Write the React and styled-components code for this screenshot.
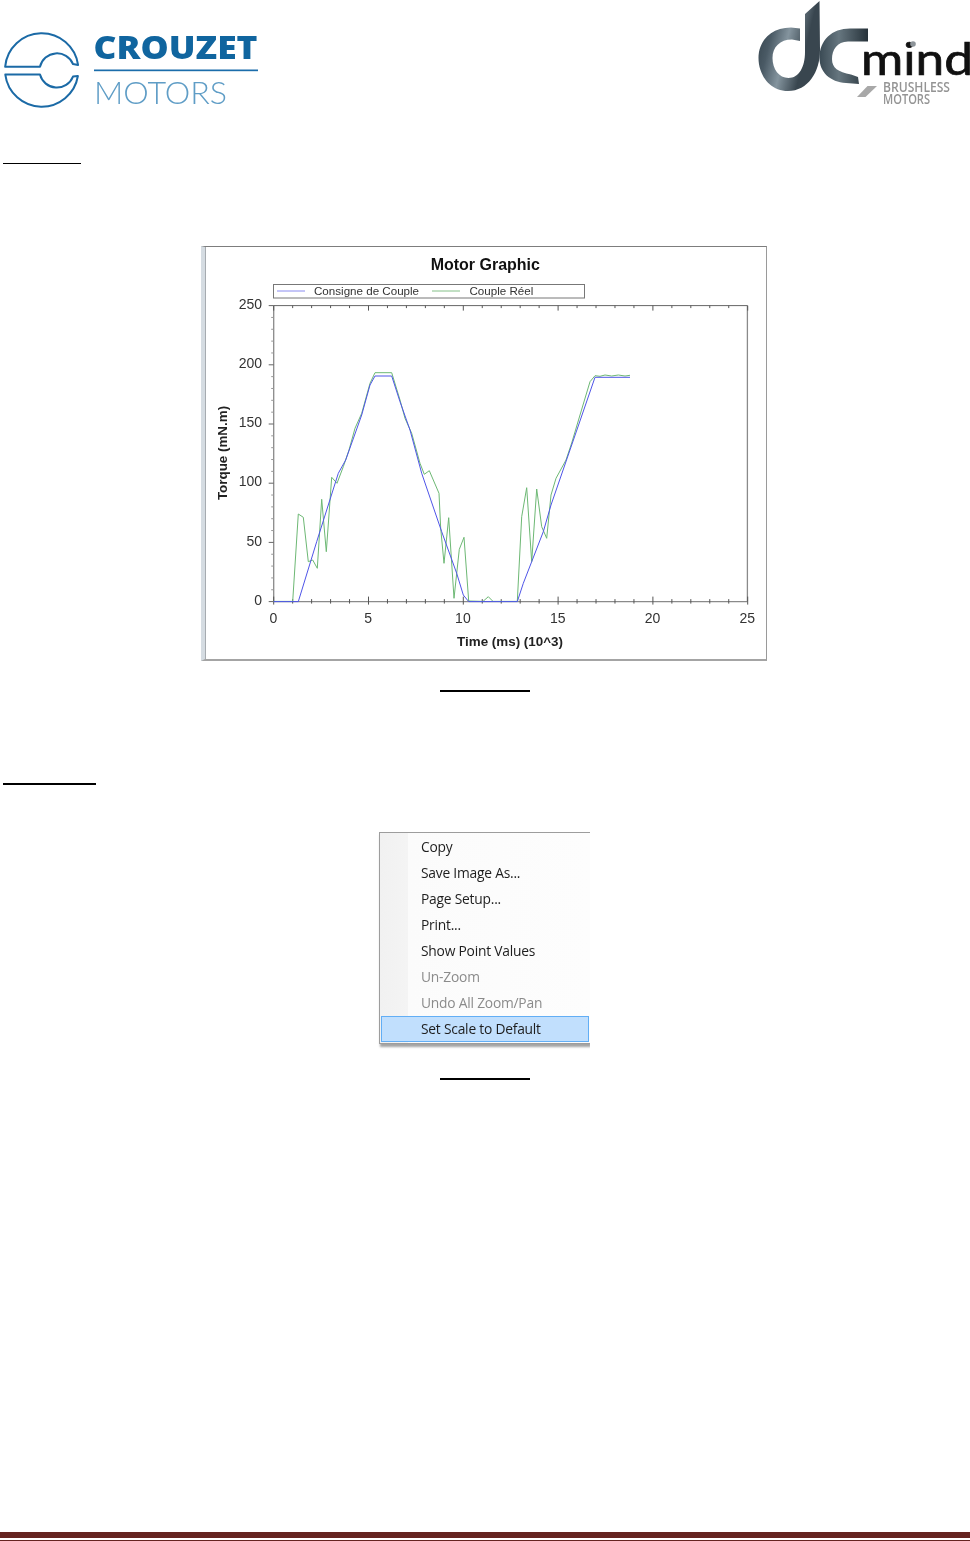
import React from "react";
import styled, { createGlobalStyle } from "styled-components";

const Global = createGlobalStyle`
  html, body { margin: 0; padding: 0; background: #fff; }
  body { font-family: "Liberation Sans", Arial, sans-serif; }
`;

const Page = styled.div`
  display: flex;
  flex-direction: column;
  width: 970px;
  height: 1541px;
  overflow: hidden;
  background: #fff;
`;

const Header = styled.header`
  display: flex;
  justify-content: space-between;
  align-items: flex-start;
  height: 110px;
`;

const Logo = styled.svg`
  display: block;
  filter: blur(0.35px);
`;

const HeadingRule = styled.div`
  width: ${(p) => p.$width}px;
  height: ${(p) => p.$thickness}px;
  margin: ${(p) => p.$top}px 0 0 3px;
  background: #000;
`;

const Figure = styled.figure`
  display: flex;
  flex-direction: column;
  align-items: center;
  margin: ${(p) => p.$top}px 0 0;
`;

const CaptionRule = styled.figcaption`
  width: 90px;
  height: 2px;
  margin-top: ${(p) => p.$top}px;
  background: #000;
`;

const ChartFrame = styled.div`
  box-sizing: border-box;
  width: 566px;
  height: 415px;
  margin-right: 2px;
  background: #fff;
  border-top: 1px solid #7d7d7d;
  border-right: 1px solid #9a9a9a;
  border-bottom: 2px solid #a4a4a4;
  border-left: 4px solid #d5dce2;
  box-shadow: inset 1px 0 0 #a6abb0;
  filter: blur(0.35px);
`;

const ChartSvg = styled.svg`
  display: block;
  width: 100%;
  height: 100%;
`;

const Menu = styled.ul`
  box-sizing: border-box;
  align-self: flex-start;
  width: 211px;
  height: 212px;
  margin: 0 0 0 379px;
  padding: 1px 0 0 1px;
  list-style: none;
  background: linear-gradient(90deg, #f1f1f1 0, #f4f4f4 28px, #fbfbfb 28px, #fdfdfd 100%);
  border: 1px solid #9d9d9d;
  border-right: none;
  box-shadow: 1px 3px 2px rgba(90, 90, 90, 0.55);
  clip-path: inset(0 0 -6px -2px);
  filter: blur(0.25px);
`;

const MenuItem = styled.li`
  box-sizing: border-box;
  display: flex;
  align-items: center;
  width: 208px;
  height: 26px;
  padding-left: ${(p) => (p.$active ? 39 : 40)}px;
  padding-bottom: 2px;
  font-family: "Open Sans", "Noto Sans", sans-serif;
  font-size: 13.8px;
  letter-spacing: -0.22px;
  color: ${(p) => (p.$disabled ? "#8b8b8b" : "#1e1e1e")};
  background: ${(p) => (p.$active ? "#c1dffd" : "transparent")};
  border: ${(p) => (p.$active ? "1px solid #62aef5" : "none")};
`;

const Footer = styled.footer`
  margin-top: auto;
  height: 9px;
  border-top: 6px solid #652320;
  box-sizing: border-box;
  &::after {
    content: "";
    display: block;
    height: 1px;
    margin-top: 2px;
    background: #652320;
  }
`;

function CrouzetLogo() {
  return (
    <Logo width="270" height="110" viewBox="0 0 270 110">
      <g fill="none" stroke="#1b6aa6" strokeWidth="2" strokeLinejoin="round">
        <path d="M78.06 65 A36.7 36.7 0 0 0 5.14 66.8 L40 66.8 A17.4 17.4 0 0 1 73 64 Z" />
        <path d="M77.9 76 A36.7 36.7 0 0 1 5.3 74.6 L40 74.6 A17.4 17.4 0 0 0 73 76.6 Z" />
      </g>
      <text x="93.5" y="58.5" fontFamily="'Open Sans', sans-serif" fontWeight="800" fontSize="31.5" fill="#10659f" textLength="164" lengthAdjust="spacingAndGlyphs">CROUZET</text>
      <rect x="94" y="69.5" width="164" height="1.7" fill="#1b6dab" />
      <text x="94" y="104" fontFamily="Lato, 'Open Sans', sans-serif" fontWeight="300" fontSize="31" fill="#5f9dc6" textLength="133" lengthAdjust="spacingAndGlyphs">MOTORS</text>
    </Logo>
  );
}

function DcMindLogo() {
  return (
    <Logo width="220" height="110" viewBox="750 0 220 110">
      <defs>
        <linearGradient id="dcA" x1="0" y1="0" x2="1" y2="0.35">
          <stop offset="0" stopColor="#2f3d46" />
          <stop offset="0.3" stopColor="#4a5a65" />
          <stop offset="0.55" stopColor="#84949e" />
          <stop offset="0.85" stopColor="#39464f" />
        </linearGradient>
        <linearGradient id="dcB" x1="0" y1="0" x2="1" y2="0">
          <stop offset="0" stopColor="#3a4a54" />
          <stop offset="0.4" stopColor="#66767f" />
          <stop offset="1" stopColor="#26323a" />
        </linearGradient>
      </defs>
      <path
        fill="url(#dcA)"
        d="M805 14 L819.5 1 L820 50 C820 72 808 91 788 91 C769 91 758.5 74 758.5 58 C758.5 41 771 27.5 791 27.5 L800 28.5 L800 41 L792 39.5 C780 39.5 772.5 47 772.5 58 C772.5 69 779 78 788.5 78 C799 78 805 67 805 52 Z"
      />
      <path
        fill="url(#dcB)"
        d="M868 28.5 L868 41.5 L848 41.5 C837 41.5 832 50 832 59 C832 68 838 72 851 74.5 L858 77 L859 84 L846 83 C830 82 819.5 72 819.5 58 C819.5 40 832 28.5 850 28.5 Z"
      />
      <text x="861" y="75" fontFamily="Lato, 'Open Sans', sans-serif" fontWeight="400" fontSize="44" fill="#111" stroke="#111" strokeWidth="0.7" textLength="112" lengthAdjust="spacingAndGlyphs">mind</text>
      <circle cx="913" cy="44" r="2.8" fill="#8d9499" />
      <polygon points="857,97 867.5,86 877,86 865.5,97" fill="#a8a8a8" />
      <text x="883" y="92" fontFamily="'Open Sans', sans-serif" fontWeight="600" fontSize="14" fill="#949494" textLength="67" lengthAdjust="spacingAndGlyphs">BRUSHLESS</text>
      <text x="883" y="104" fontFamily="'Open Sans', sans-serif" fontWeight="600" fontSize="14" fill="#949494" textLength="47" lengthAdjust="spacingAndGlyphs">MOTORS</text>
    </Logo>
  );
}

const X0 = 273.7;
const XS = 18.96;
const Y0 = 601.6;
const YT = 305.6;
const X1 = 747.4;

const green = [
  [273.7, 601.4], [292.7, 601.4], [298.3, 514], [303.3, 517.3], [308.3, 561.7], [312.7, 560], [317.3, 568.3],
  [321.7, 499.3], [326.3, 551.7], [331.7, 477.3], [337, 483.3], [343.3, 466.7], [349, 450], [355, 428.3],
  [361.7, 413.3], [370, 383.3], [375, 372.7], [391.7, 372.7], [400, 400], [405, 418.3], [411.7, 433.3],
  [420, 463.3], [424.3, 474.3], [429.3, 470.7], [439, 493.3], [440.7, 528.3], [444, 563.3], [448.7, 517.7],
  [454, 598.3], [459.3, 549.3], [464, 537.3], [468.7, 601], [483, 601.4], [488.3, 596.7], [493, 601.4],
  [517.3, 601.4], [521.7, 516.7], [526.7, 487.7], [531.7, 561.7], [536.7, 489], [541.7, 526.7], [546.7, 538.3],
  [551, 495], [556, 478.3], [566, 460], [571.7, 443], [580, 415], [590, 381.7], [595, 375.7], [600, 376.3],
  [605, 375], [611.7, 376], [618.3, 375], [625, 376], [630, 375.3],
];

const blue = [
  [273.7, 601.6], [298.3, 601.6], [316.7, 541.7], [338.3, 473.3], [345.7, 460], [361.7, 415], [370, 385],
  [375, 376], [391.7, 376], [400, 401.7], [410, 430], [421.7, 473.3], [441.7, 531.7], [456.7, 573.3],
  [463.3, 595], [468.7, 601.6], [517.3, 601.6], [523.3, 583.3], [531.7, 561.7], [543.3, 531.7], [551, 505],
  [571.7, 445], [595, 377.3], [630, 377.3],
];

const toPoints = (list) => list.map((p) => p.join(",")).join(" ");
const ticks = Array.from({ length: 26 }, (_, i) => i);

function Chart() {
  const label = { fontFamily: "'Liberation Sans', Arial, sans-serif", fill: "#333" };
  return (
    <ChartFrame>
      <ChartSvg viewBox="205 247 561 412">
        <text {...label} x="485.3" y="270" fontSize="16" fontWeight="700" textAnchor="middle" fill="#111">Motor Graphic</text>
        <rect x="273.5" y="284.5" width="311" height="13.5" fill="#fff" stroke="#777" strokeWidth="1" />
        <line x1="277" x2="305" y1="291" y2="291" stroke="#8a8cf0" strokeWidth="1" />
        <text {...label} x="314" y="295" fontSize="11.6">Consigne de Couple</text>
        <line x1="432" x2="460" y1="291" y2="291" stroke="#84c088" strokeWidth="1" />
        <text {...label} x="469.5" y="295" fontSize="11.6">Couple Réel</text>

        <g stroke="#8a8a8a" strokeWidth="1.3" fill="none">
          <line x1={X0} x2={X1} y1={Y0} y2={Y0} />
          <line x1={X0} x2={X0} y1={YT} y2={Y0} />
          <line x1={X1} x2={X1} y1={YT} y2={Y0} />
          <line x1={X0} x2={X1} y1={YT} y2={YT} stroke="#666" strokeWidth="1" />
        </g>
        <g stroke="#555" strokeWidth="1">
          {ticks.map((i) => {
            const x = X0 + i * XS;
            const major = i % 5 === 0;
            return (
              <g key={i}>
                <line x1={x} x2={x} y1={YT} y2={YT + (major ? 5 : 2.5)} />
                <line x1={x} x2={x} y1={Y0 - (major ? 5 : 2.5)} y2={Y0 + (major ? 3 : 2)} />
              </g>
            );
          })}
          {ticks.map((i) => {
            const y = Y0 - (i * (Y0 - YT)) / 25;
            const major = i % 5 === 0;
            return <line key={i} x1={X0 - (major ? 5 : 2.5)} x2={X0} y1={y} y2={y} stroke={major ? "#666" : "#999"} />;
          })}
        </g>
        {[0, 5, 10, 15, 20, 25].map((v) => (
          <text {...label} key={v} x={X0 - 0.4 + v * XS} y="623" fontSize="14" textAnchor="middle">{v}</text>
        ))}
        {[0, 50, 100, 150, 200, 250].map((v) => (
          <text {...label} key={v} x="262" y={Y0 + 3.2 - (v * (Y0 - YT)) / 250} fontSize="14" textAnchor="end">{v}</text>
        ))}
        <text {...label} x="510" y="645.5" fontSize="13.4" fontWeight="700" textAnchor="middle" fill="#222">Time (ms) (10^3)</text>
        <text {...label} transform="translate(226.5 453) rotate(-90)" fontSize="13.4" fontWeight="700" textAnchor="middle" fill="#222">Torque (mN.m)</text>

        <polyline points={toPoints(green)} fill="none" stroke="#6db874" strokeWidth="1" strokeLinejoin="round" />
        <polyline points={toPoints(blue)} fill="none" stroke="#4f55e8" strokeWidth="1" strokeLinejoin="round" />
      </ChartSvg>
    </ChartFrame>
  );
}

const items = [
  { label: "Copy" },
  { label: "Save Image As..." },
  { label: "Page Setup..." },
  { label: "Print..." },
  { label: "Show Point Values" },
  { label: "Un-Zoom", disabled: true },
  { label: "Undo All Zoom/Pan", disabled: true },
  { label: "Set Scale to Default", active: true },
];

export default function App() {
  return (
    <Page>
      <Global />
      <Header>
        <CrouzetLogo />
        <DcMindLogo />
      </Header>
      <HeadingRule $width={78} $thickness={1} $top={53} />
      <Figure $top={82}>
        <Chart />
        <CaptionRule $top={29} />
      </Figure>
      <HeadingRule $width={93} $thickness={2} $top={91} />
      <Figure $top={47}>
        <Menu>
          {items.map((it) => (
            <MenuItem key={it.label} $disabled={it.disabled} $active={it.active}>{it.label}</MenuItem>
          ))}
        </Menu>
        <CaptionRule $top={34} />
      </Figure>
      <Footer />
    </Page>
  );
}
